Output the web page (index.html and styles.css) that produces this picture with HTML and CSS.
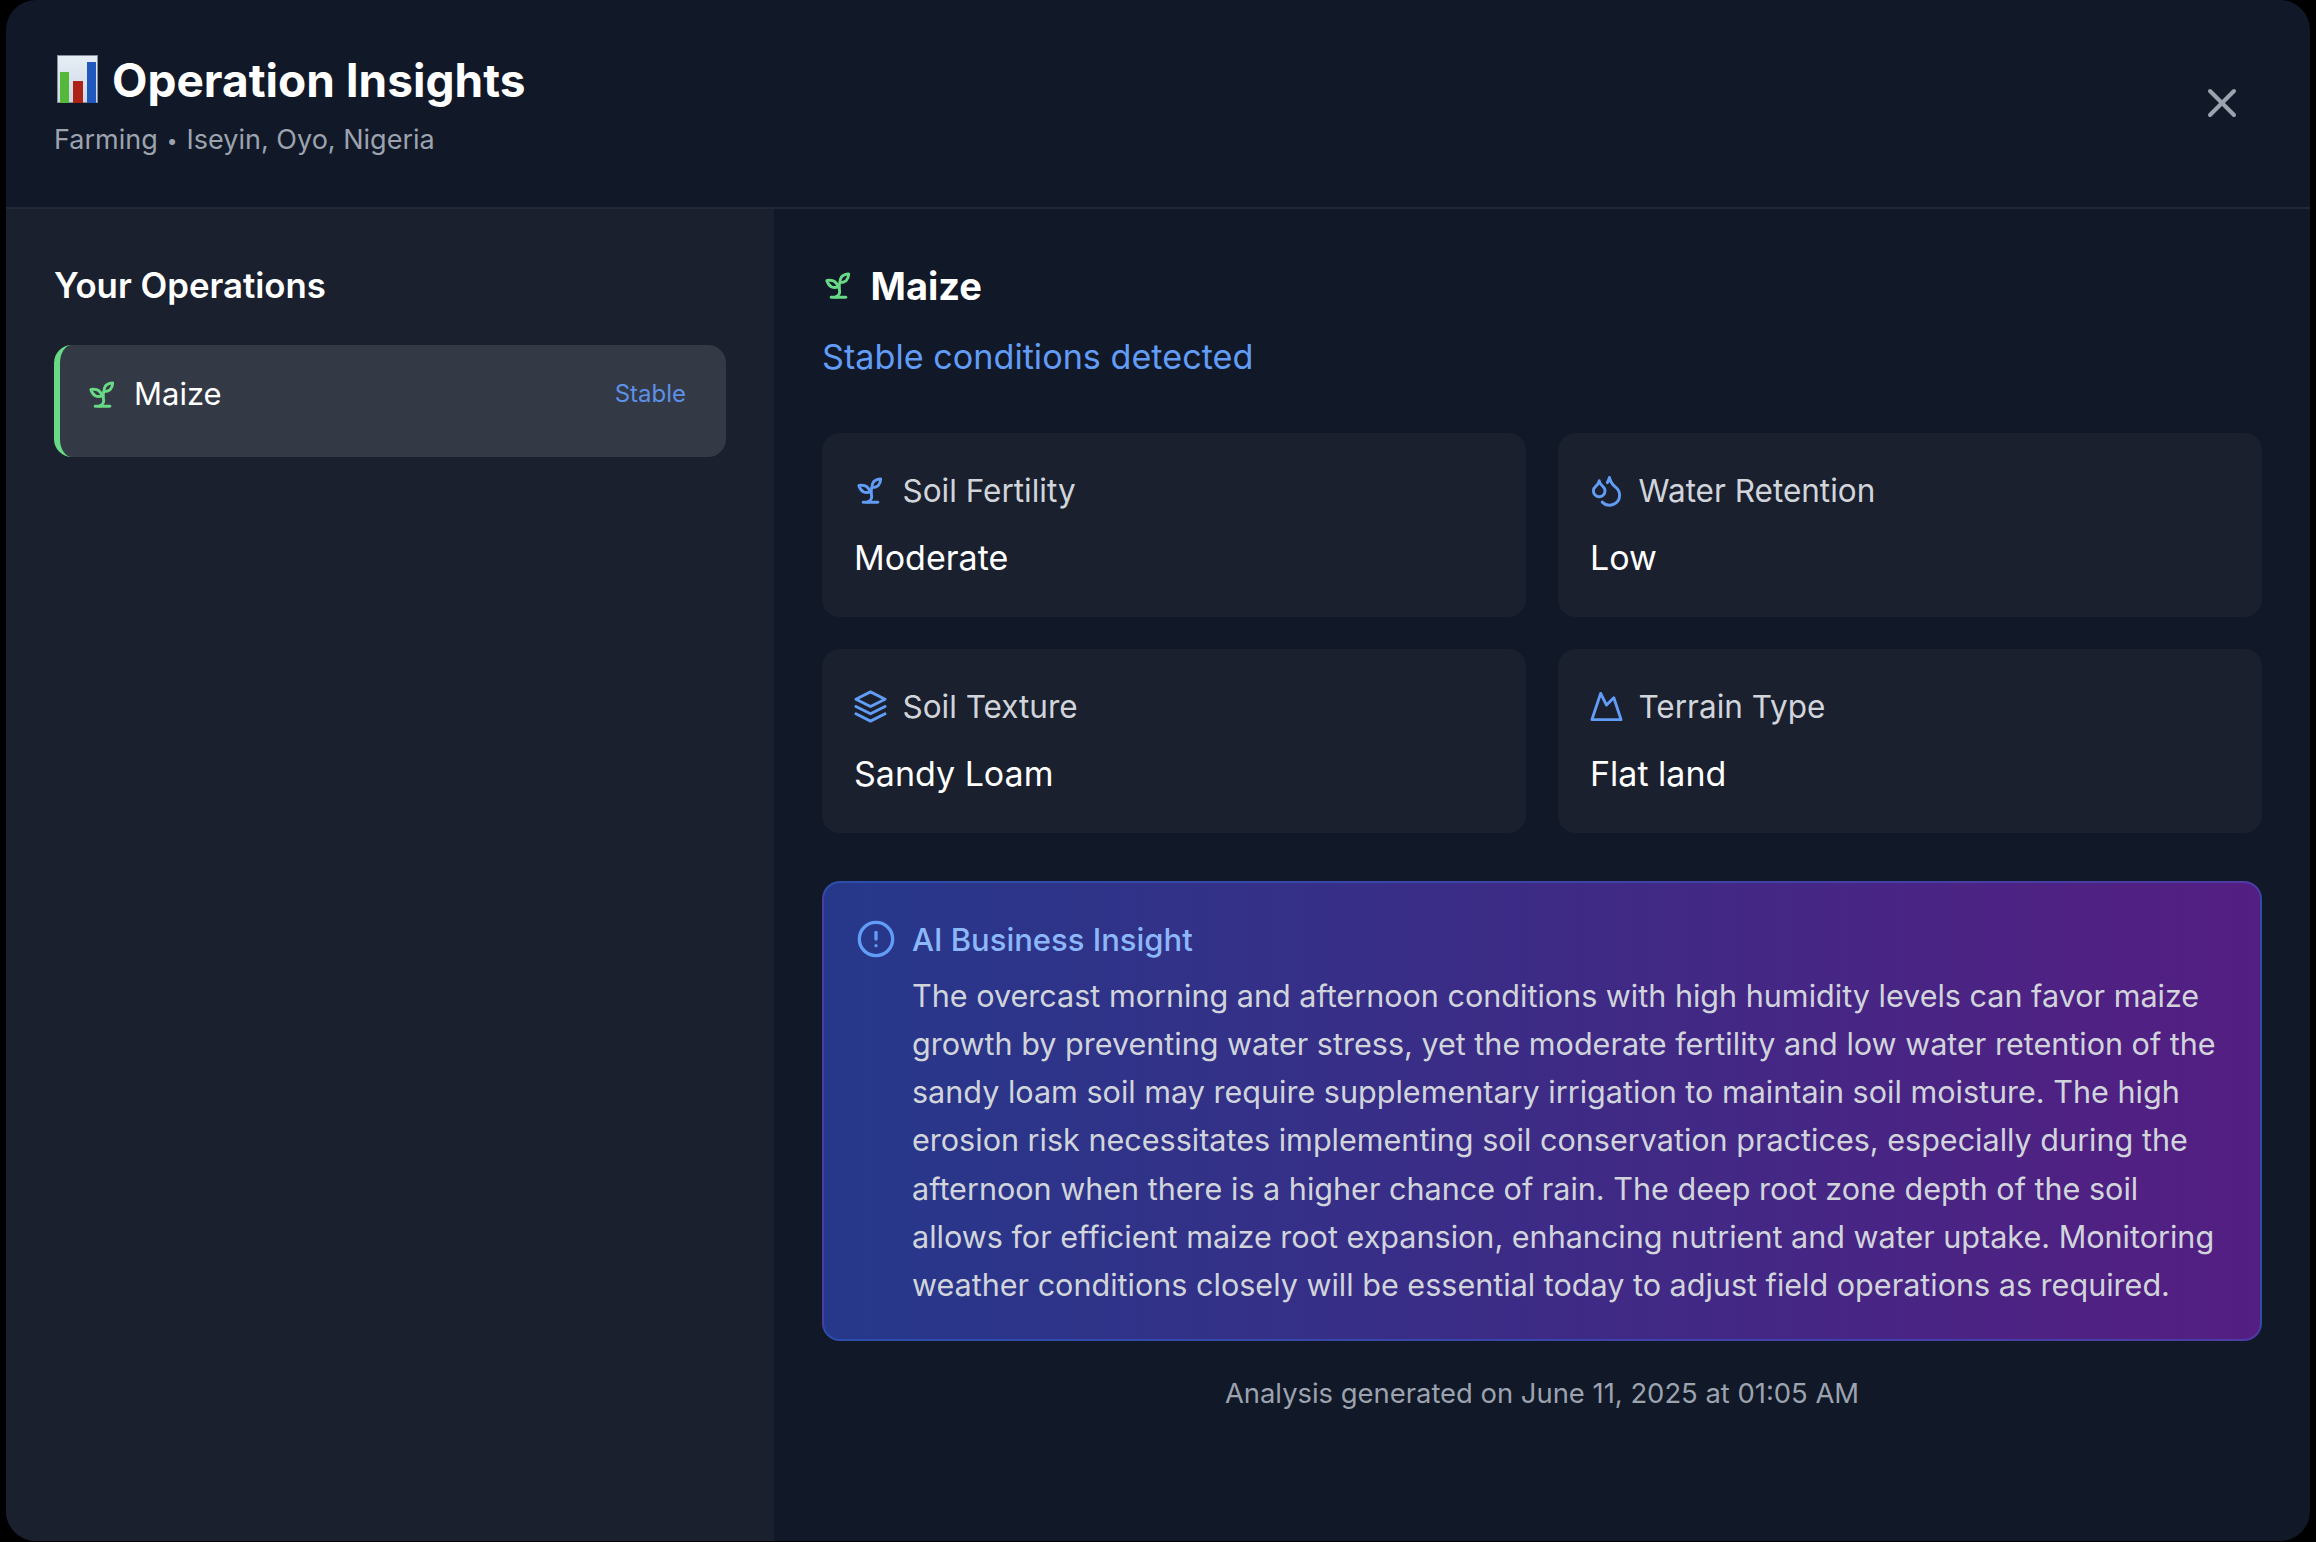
FILE: index.html
```html
<!DOCTYPE html>
<html lang="en">
<head>
<meta charset="utf-8">
<title>Operation Insights</title>
<link rel="stylesheet" href="styles.css">
</head>
<body>
<div class="modal">
  <header class="modal-header">
    <div class="header-text">
      <h1 class="title">
        <svg class="chart-emoji" viewBox="0 0 41 48" aria-hidden="true">
          <defs><linearGradient id="chartbg" x1="0" y1="0" x2="0" y2="1"><stop offset="0" stop-color="#e6edf5"/><stop offset="1" stop-color="#cfd9e6"/></linearGradient></defs>
          <rect x="0" y="0" width="41" height="48" fill="#868e99"/>
          <rect x="1" y="1" width="39" height="46" fill="url(#chartbg)"/>
          <rect x="3" y="17" width="9" height="31" fill="#54b83a"/>
          <rect x="16" y="26" width="10" height="22" fill="#ad2318"/>
          <rect x="30" y="7" width="9" height="41" fill="#2158bd"/>
        </svg>
        <span class="title-text">Operation Insights</span>
      </h1>
      <p class="subtitle">Farming <span class="dot">•</span> Iseyin, Oyo, Nigeria</p>
    </div>
    <button class="close" type="button" aria-label="Close">
      <svg class="icon-close" viewBox="0 0 24 24"><path d="M18 6 6 18"/><path d="m6 6 12 12"/></svg>
    </button>
  </header>
  <div class="modal-body">
    <aside class="sidebar">
      <h2 class="sidebar-title">Your Operations</h2>
      <div class="op-item">
        <div class="op-row">
          <svg class="icon green" viewBox="0 0 24 24"><path d="M7 20h10"/><path d="M10 20c5.5-2.5.8-6.4 3-10"/><path d="M9.5 9.4c1.1.8 1.8 2.2 2.3 3.7-2 .4-3.5.4-4.8-.3-1.2-.6-2.3-1.9-3-4.2 2.8-.5 4.4 0 5.5.8z"/><path d="M14.1 6a7 7 0 0 0-1.1 4c1.9-.1 3.3-.6 4.3-1.4 1-1 1.6-2.3 1.7-4.6-2.7.1-4 1-4.9 2z"/></svg>
          <span class="op-name">Maize</span>
          <span class="op-status">Stable</span>
        </div>
      </div>
    </aside>
    <main class="main">
      <div class="crop-head">
        <svg class="icon green" viewBox="0 0 24 24"><path d="M7 20h10"/><path d="M10 20c5.5-2.5.8-6.4 3-10"/><path d="M9.5 9.4c1.1.8 1.8 2.2 2.3 3.7-2 .4-3.5.4-4.8-.3-1.2-.6-2.3-1.9-3-4.2 2.8-.5 4.4 0 5.5.8z"/><path d="M14.1 6a7 7 0 0 0-1.1 4c1.9-.1 3.3-.6 4.3-1.4 1-1 1.6-2.3 1.7-4.6-2.7.1-4 1-4.9 2z"/></svg>
        <h2 class="crop-name">Maize</h2>
      </div>
      <p class="crop-status">Stable conditions detected</p>
      <div class="stats">
        <div class="stat">
          <div class="stat-label">
            <svg class="icon blue" viewBox="0 0 24 24"><path d="M7 20h10"/><path d="M10 20c5.5-2.5.8-6.4 3-10"/><path d="M9.5 9.4c1.1.8 1.8 2.2 2.3 3.7-2 .4-3.5.4-4.8-.3-1.2-.6-2.3-1.9-3-4.2 2.8-.5 4.4 0 5.5.8z"/><path d="M14.1 6a7 7 0 0 0-1.1 4c1.9-.1 3.3-.6 4.3-1.4 1-1 1.6-2.3 1.7-4.6-2.7.1-4 1-4.9 2z"/></svg>
            <span>Soil Fertility</span>
          </div>
          <div class="stat-value">Moderate</div>
        </div>
        <div class="stat">
          <div class="stat-label">
            <svg class="icon blue" viewBox="0 0 24 24"><path d="M7 16.3c2.2 0 4-1.83 4-4.05 0-1.16-.57-2.26-1.71-3.19S7.29 6.75 7 5.3c-.29 1.45-1.14 2.84-2.29 3.76S3 11.1 3 12.25c0 2.22 1.8 4.05 4 4.05z"/><path d="M12.56 6.6A10.97 10.97 0 0 0 14 3.02c.5 2.5 2 4.9 4 6.5s3 3.5 3 5.5a6.98 6.98 0 0 1-11.91 4.97"/></svg>
            <span>Water Retention</span>
          </div>
          <div class="stat-value">Low</div>
        </div>
        <div class="stat">
          <div class="stat-label">
            <svg class="icon blue" viewBox="0 0 24 24"><polygon points="12 2 2 7 12 12 22 7 12 2"/><polyline points="2 17 12 22 22 17"/><polyline points="2 12 12 17 22 12"/></svg>
            <span>Soil Texture</span>
          </div>
          <div class="stat-value">Sandy Loam</div>
        </div>
        <div class="stat">
          <div class="stat-label">
            <svg class="icon blue" viewBox="0 0 24 24"><path d="m8 3 4 8 5-5 5 15H2L8 3z"/></svg>
            <span>Terrain Type</span>
          </div>
          <div class="stat-value">Flat land</div>
        </div>
      </div>
      <section class="insight">
        <svg class="icon-alert" viewBox="0 0 24 24"><circle cx="12" cy="12" r="10"/><line x1="12" y1="8" x2="12" y2="12"/><line x1="12" y1="16" x2="12.01" y2="16"/></svg>
        <div class="insight-text">
          <h3 class="insight-title">AI Business Insight</h3>
          <p class="insight-body">The overcast morning and afternoon conditions with high humidity levels can favor maize growth by preventing water stress, yet the moderate fertility and low water retention of the sandy loam soil may require supplementary irrigation to maintain soil moisture. The high erosion risk necessitates implementing soil conservation practices, especially during the afternoon when there is a higher chance of rain. The deep root zone depth of the soil allows for efficient maize root expansion, enhancing nutrient and water uptake. Monitoring weather conditions closely will be essential today to adjust field operations as required.</p>
        </div>
      </section>
      <p class="generated">Analysis generated on June 11, 2025 at 01:05 AM</p>
    </main>
  </div>
</div>
</body>
</html>
```
FILE: styles.css
```css
* { box-sizing: border-box; }
html, body { margin: 0; height: 100%; background: #000; }
body { padding: 0 6px 1px; font-family: Inter, "Noto Sans", sans-serif; color: #fff; overflow: hidden; }
h1, h2, h3, p { margin: 0; }
.modal { height: 100%; background: #111827; border-radius: 30px; display: flex; flex-direction: column; overflow: hidden; }
.modal-header { height: 209px; flex: none; border-bottom: 2px solid #1f2937; padding: 0 48px; display: flex; justify-content: space-between; }
.header-text { padding-top: 55px; }
.title { display: flex; align-items: flex-start; gap: 14px; font-size: 46px; line-height: 48px; font-weight: 700; color: #fff; }
.title-text { margin-top: 1px; }
.chart-emoji { width: 41px; height: 48px; margin-left: 3px; flex: none; }
.subtitle { margin-top: 18px; font-size: 27px; line-height: 36px; color: #9ca3af; }
.dot { font-size: 19px; padding: 0 1.5px; vertical-align: 1px; }
.close { align-self: flex-start; margin-top: 79px; margin-right: 16px; padding: 0; width: 48px; height: 48px; background: none; border: 0; }
.icon-close { width: 48px; height: 48px; display: block; fill: none; stroke: #9ca3af; stroke-width: 2; stroke-linecap: round; stroke-linejoin: round; }
.modal-body { flex: 1; display: flex; min-height: 0; }
.sidebar { width: 768px; flex: none; background: #1a202e; padding: 56px 48px 48px; }
.sidebar-title { font-size: 34.8px; line-height: 40px; font-weight: 600; margin-bottom: 40px; color: #fff; }
.op-item { height: 112px; background: #333945; border-left: 6px solid #68d984; border-radius: 18px; padding: 31px 40px 0 26px; }
.op-row { display: flex; align-items: center; gap: 14px; }
.op-name { font-size: 31px; line-height: 36px; font-weight: 400; flex: 1; color: #fff; }
.op-status { font-size: 24px; line-height: 36px; color: #5d90e6; }
.icon { width: 35px; height: 35px; margin-left: -1px; flex: none; fill: none; stroke-width: 2; stroke-linecap: round; stroke-linejoin: round; }
.green { stroke: #68d984; }
.blue { stroke: #619cf6; }
.main { flex: 1; padding: 52px 48px 0; min-width: 0; }
.crop-head { display: flex; align-items: center; gap: 14.5px; height: 48px; }
.crop-name { padding-top: 2px; font-size: 38px; line-height: 48px; font-weight: 700; color: #fff; }
.crop-status { margin-top: 24px; font-size: 34.2px; line-height: 48px; color: #619cf6; }
.stats { margin-top: 52px; display: grid; grid-template-columns: 1fr 1fr; gap: 32px; }
.stat { height: 184px; background: #1a202e; border-radius: 18px; padding: 37.5px 32px 0; }
.stat-label { display: flex; align-items: center; gap: 14.5px; font-size: 31.5px; line-height: 40px; color: #d1d5db; }
.stat-value { margin-top: 26px; font-size: 34px; line-height: 42px; color: #fff; }
.insight { margin-top: 48px; height: 460px; display: flex; gap: 16px; padding: 37px 32px 0; background: linear-gradient(to right, #26388a, #541e82); border: 2px solid rgba(59, 130, 246, 0.3); border-radius: 18px; }
.icon-alert { width: 40px; height: 40px; flex: none; margin-top: -1px; fill: none; stroke: #619cf6; stroke-width: 2; stroke-linecap: round; stroke-linejoin: round; }
.insight-title { font-size: 31px; line-height: 40px; font-weight: 500; color: #8cb8fb; }
.insight-body { margin-top: 12px; font-size: 30.55px; line-height: 48.15px; color: #d1d5db; }
.generated { margin-top: 34px; text-align: center; font-size: 27.4px; line-height: 36px; color: #9ca3af; }
```
